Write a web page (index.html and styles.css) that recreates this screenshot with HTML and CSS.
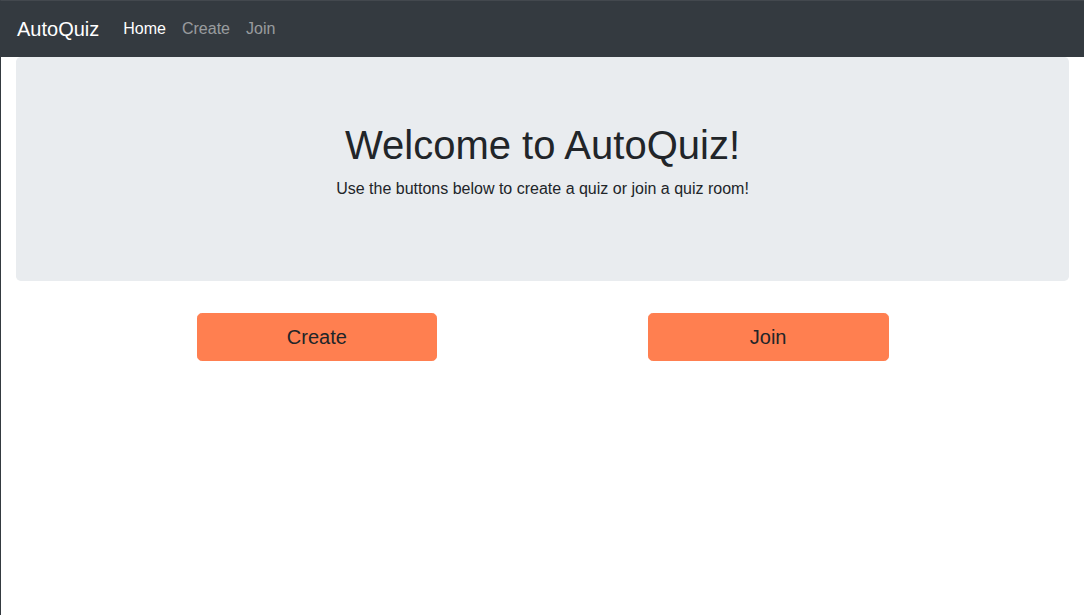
FILE: index.html
```html
<!DOCTYPE html>
<html lang="en">
<head>
<meta charset="utf-8">
<title>AutoQuiz</title>
<link rel="stylesheet" href="styles.css">
</head>
<body>
<div class="page">
  <nav class="navbar">
    <a class="brand" href="#">AutoQuiz</a>
    <ul class="nav">
      <li><a class="nav-link active" href="#">Home</a></li>
      <li><a class="nav-link" href="#">Create</a></li>
      <li><a class="nav-link" href="#">Join</a></li>
    </ul>
  </nav>
  <main class="container">
    <section class="jumbotron">
      <h1 class="title">Welcome to AutoQuiz!</h1>
      <p class="lead">Use the buttons below to create a quiz or join a quiz room!</p>
    </section>
    <div class="row">
      <div class="col"><a class="btn" href="#">Create</a></div>
      <div class="col"><a class="btn" href="#">Join</a></div>
    </div>
  </main>
</div>
</body>
</html>
```
FILE: styles.css
```css
* { box-sizing: border-box; }
html, body { margin: 0; padding: 0; height: 100%; }
body {
  font-family: "Liberation Sans", Arial, sans-serif;
  font-size: 16px;
  line-height: 1.5;
  color: #212529;
  background: #fff;
}
.page {
  min-height: 100%;
  border-left: 1px solid #343a40;
  border-top: 1px solid #43484e;
}
.navbar {
  display: flex;
  align-items: center;
  height: 56px;
  padding: 8px 16px;
  background: #343a40;
}
.brand {
  font-size: 20px;
  line-height: 30px;
  color: #fff;
  text-decoration: none;
  margin-right: 16px;
  padding: 5px 0;
}
.nav {
  display: flex;
  list-style: none;
  margin: 0;
  padding: 0;
}
.nav-link {
  display: block;
  padding: 8px;
  color: rgba(255,255,255,.5);
  text-decoration: none;
}
.nav-link.active { color: #fff; }
.container {
  padding: 0 15px;
}
.jumbotron {
  background: #e9ecef;
  border-radius: 4.8px;
  padding: 64px 32px;
  margin-bottom: 32px;
  text-align: center;
}
.title {
  font-size: 40px;
  font-weight: 500;
  line-height: 1.2;
  margin: 0 0 8px;
}
.lead {
  margin: 0 0 16px;
}
.row {
  display: grid;
  grid-template-columns: repeat(12, 1fr);
  margin: 0 -15px;
}
.col {
  padding: 0 15px;
  grid-column: span 3;
}
.col:nth-child(1) { grid-column: 3 / span 3; }
.col:nth-child(2) { grid-column: 8 / span 3; }
.btn {
  display: block;
  width: 100%;
  text-align: center;
  font-size: 20px;
  line-height: 30px;
  padding: 8px 16px;
  border: 1px solid #ff7f50;
  border-radius: 4.8px;
  background: #ff7f50;
  color: #212529;
  text-decoration: none;
}
```
